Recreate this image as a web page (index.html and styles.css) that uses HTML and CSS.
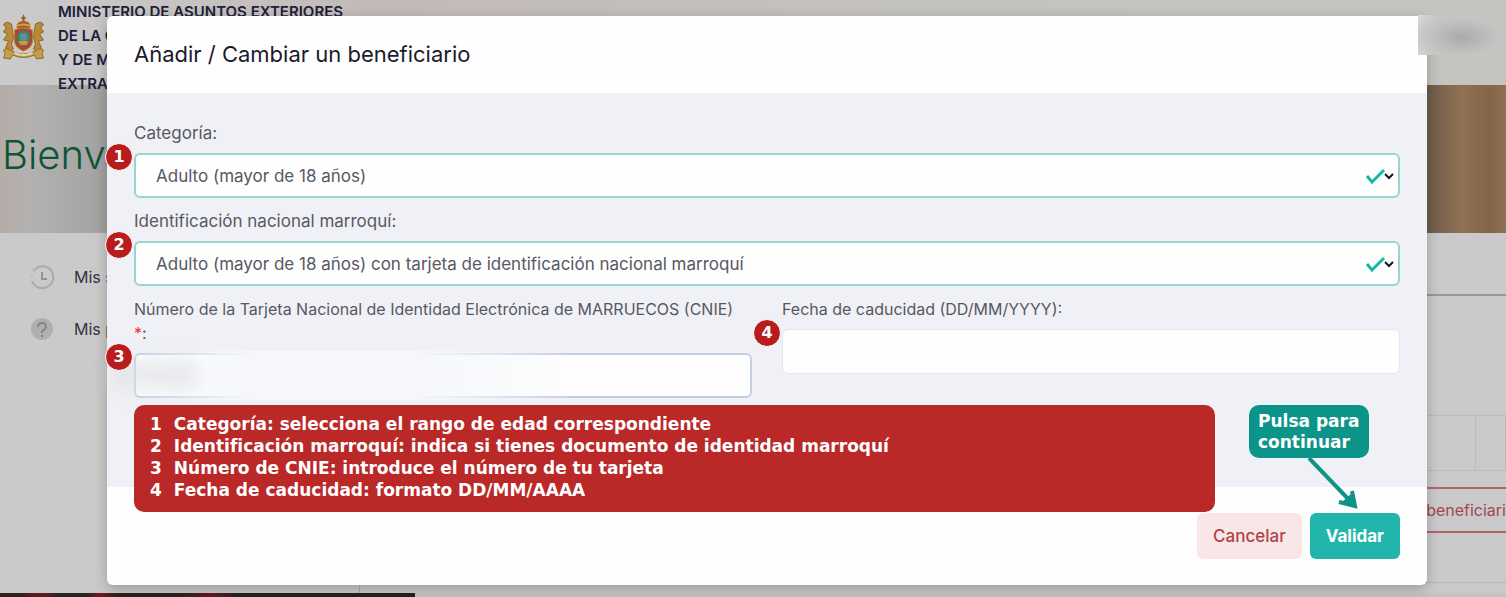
FILE: index.html
```html
<!DOCTYPE html>
<html lang="es">
<head>
<meta charset="utf-8">
<title>Añadir / Cambiar un beneficiario</title>
<link rel="stylesheet" href="styles.css">
</head>
<body>
<div class="page">
  <header class="site-header">
    <svg class="crest" viewBox="0 0 44 50" aria-hidden="true">
      <path d="M22 1l1 3 2 1-2 1v3h-2V6l-2-1 2-1z" fill="#8c5a22"/>
      <path d="M15 14q0-6 7-6t7 6l-2 4H17z" fill="#ad572f"/>
      <path d="M15 13q7-3 14 0" fill="none" stroke="#d0a83f" stroke-width="2"/>
      <path d="M13 17q9-4 18 0v12q-1 6-9 9-8-3-9-9z" fill="#b3423a" stroke="#b98c30"/>
      <ellipse cx="22" cy="25" rx="7" ry="8" fill="#4e7d4c"/>
      <ellipse cx="22" cy="24" rx="4" ry="4" fill="#5b8fa6"/>
      <path d="M17 28h10l-2 4h-6z" fill="#c79b38"/>
      <path d="M10 11q-6-4-8 1l3 2-3 5 4 2-4 6 5 1-3 7 4 4 4-3-2-5 2-6-1-8z" fill="#b88a3c" stroke="#94652a"/>
      <path d="M34 11q6-4 8 1l-3 2 3 5-4 2 4 6-5 1 3 7-4 4-4-3 2-5-2-6 1-8z" fill="#b88a3c" stroke="#94652a"/>
      <path d="M2 37q4-3 8 1 12 6 24 0 4-4 8-1-3 3 0 8l-7 1-2-4q-11 5-22 0l-2 4-7-1q3-5 0-8z" fill="#c2a04a" stroke="#8f6c2a"/>
      <path d="M13 40q9 4 18 0" fill="none" stroke="#e2d9b4" stroke-width="2"/>
    </svg>
    <div class="ministry">MINISTERIO DE ASUNTOS EXTERIORES<br>DE LA C<br>Y DE M<br>EXTRA</div>
  </header>
  <div class="hero"><h1 class="welcome">Bienv</h1></div>
  <main class="panel">
    <nav class="side">
      <a class="side-link" href="#">
        <svg class="side-icon" viewBox="0 0 24 24" aria-hidden="true"><path d="M5 4a11 11 0 1 1-3 12" fill="none" stroke="#aaa" stroke-width="2"/><path d="M2 12V9m1-3l2-2m0 0v4m0-4H1" fill="none" stroke="#b2b2b2" stroke-width="1"/><path d="M12 7v7h5" fill="none" stroke="#929292" stroke-width="2"/></svg>
        Mis s</a>
      <a class="side-link" href="#">
        <svg class="side-icon" viewBox="0 0 24 24" aria-hidden="true"><circle cx="12" cy="12" r="11" fill="#b0b0b0"/><path d="M8 10q0-4 4-4t4 4q0 2-4 4v2m0 2v2" fill="none" stroke="#858585" stroke-width="2"/></svg>
        Mis p</a>
    </nav>
    <section class="content">
      <div class="content-top"></div>
      <div class="content-space"></div>
      <div class="content-row"><span class="row-cell"></span></div>
      <a class="add-link" href="#">beneficiari</a>
      <div class="content-end"></div>
    </section>
  </main>
  <footer class="strip"></footer>
</div>

<div class="overlay">
  <form class="modal" role="dialog" aria-labelledby="title">
    <div class="modal-head"><h2 class="modal-title" id="title">Añadir / Cambiar un beneficiario</h2></div>
    <div class="modal-body">
      <div class="field">
        <label class="label" for="cat">Categoría:</label>
        <div class="control">
          <select class="input valid" id="cat"><option>Adulto (mayor de 18 años)</option></select>
          <svg class="marks" viewBox="0 0 30 18" aria-hidden="true"><path d="M2 9l5 6L19 3" fill="none" stroke="#17b8a8" stroke-width="3"/><path d="M20 7l4 4 4-4" fill="none" stroke="#161626" stroke-width="2"/></svg>
          <span class="badge">1</span>
        </div>
      </div>
      <div class="field">
        <label class="label" for="ident">Identificación nacional marroquí:</label>
        <div class="control">
          <select class="input valid" id="ident"><option>Adulto (mayor de 18 años) con tarjeta de identificación nacional marroquí</option></select>
          <svg class="marks" viewBox="0 0 30 18" aria-hidden="true"><path d="M2 9l5 6L19 3" fill="none" stroke="#17b8a8" stroke-width="3"/><path d="M20 7l4 4 4-4" fill="none" stroke="#161626" stroke-width="2"/></svg>
          <span class="badge">2</span>
        </div>
      </div>
      <div class="columns">
        <div class="field">
          <label class="label" for="cnie">Número de la Tarjeta Nacional de Identidad Electrónica de MARRUECOS (CNIE)<br><span class="required">*</span>:</label>
          <div class="control">
            <input class="input active" id="cnie" type="text">
            <span class="smudge"></span>
            <span class="badge">3</span>
          </div>
        </div>
        <div class="field">
          <label class="label" for="exp">Fecha de caducidad (DD/MM/YYYY):</label>
          <div class="control">
            <input class="input" id="exp" type="text">
            <span class="badge">4</span>
          </div>
        </div>
      </div>
      <ol class="legend">
        <li class="legend-item"><span>1</span><span>Categoría: selecciona el rango de edad correspondiente</span></li>
        <li class="legend-item"><span>2</span><span>Identificación marroquí: indica si tienes documento de identidad marroquí</span></li>
        <li class="legend-item"><span>3</span><span>Número de CNIE: introduce el número de tu tarjeta</span></li>
        <li class="legend-item"><span>4</span><span>Fecha de caducidad: formato DD/MM/AAAA</span></li>
      </ol>
      <div class="tip">Pulsa para<br>continuar
        <svg class="arrow" viewBox="0 0 52 52" aria-hidden="true"><path d="M2 0L46 46M45 33l3 15-16-4" fill="none" stroke="#0d9488" stroke-width="4"/><path d="M45 35l4 14-15-4z" fill="#0d9488"/></svg>
      </div>
    </div>
    <div class="modal-foot">
      <button class="btn cancel" type="button">Cancelar</button>
      <button class="btn submit" type="button">Validar</button>
    </div>
  </form>
</div>
<div class="corner"></div>
</body>
</html>
```
FILE: styles.css
```css
* { box-sizing: border-box; }

body {
  margin: 0;
  font-family: Inter, "Open Sans", sans-serif;
  font-size: 17px;
  color: #585862;
}

.page {
  isolation: isolate;
  display: flex;
  flex-direction: column;
  height: 100vh;
  overflow: hidden;
  background: #cacaca;
}

.site-header {
  z-index: 1;
  display: flex;
  flex: none;
  gap: 12px;
  height: 85px;
  padding-left: 1px;
  background: linear-gradient(90deg, #cbcbcb, #c2bab9 25%, #c5c3be 60%, #c5c4c0);
}

.crest { width: 45px; height: 50px; margin-top: 13px; }

.ministry {
  font-size: 15px;
  font-weight: 600;
  line-height: 24px;
  color: #20203a;
  white-space: nowrap;
}

.hero {
  flex: none;
  height: 148px;
  padding: 44px 0 0 2px;
  background: linear-gradient(90deg, #b5aca7, #b3b2b1 2%, #a2a2a2 7%, #8b7b6b 70%, #705e4c 95%, #8f7153 97%, #856547 99%, #8f7153);
}

.welcome {
  margin: 0;
  font-size: 40px;
  font-weight: 300;
  line-height: 52px;
  color: #0d5535;
}

.panel {
  display: grid;
  grid-template-columns: 358px 1fr;
  flex: 1;
  margin-left: 2px;
  border-radius: 6px 0 0 0;
  background: #cacaca;
}

.side {
  display: flex;
  flex-direction: column;
  gap: 28px;
  padding: 32px 28px;
  border-right: 1px solid #aaa;
}

.side-link {
  display: flex;
  align-items: center;
  gap: 20px;
  font-size: 16px;
  line-height: 24px;
  color: #33333f;
  text-decoration: none;
}

.side-icon { width: 24px; height: 24px; }

.content { display: flex; flex-direction: column; }
.content-top { height: 63px; border-bottom: 2px solid #989898; }
.content-space { height: 119px; }

.content-row {
  display: flex;
  justify-content: flex-end;
  height: 56px;
  border: 1px solid #bbb;
}

.row-cell { width: 30px; border-left: 1px solid #bbb; }

.add-link {
  margin-top: 16px;
  height: 46px;
  border: 2px solid #b36469;
  border-width: 2px 0;
  font-size: 16px;
  line-height: 42px;
  text-align: right;
  text-decoration: none;
  color: #a2474f;
}

.content-end { height: 50px; border-bottom: 1px solid #b7b7b7; }

.strip {
  z-index: 1;
  flex: none;
  height: 4px;
  background: linear-gradient(90deg, #302020 0 20px, #611b20 40px, #262424 60px 85px, #701a20 100px, #29211f 120px 180px, #611b20 210px, #222 240px 415px, #c4c4c4 415px);
}

.overlay {
  position: absolute;
  inset: 0;
  padding: 16px 79px 12px 107px;
}

.modal {
  border-radius: 6px;
  background: #fefefe;
  box-shadow: 0 4px 14px rgba(0, 0, 0, .24);
}

.modal-head { padding: 22px 27px 23px; }

.modal-title {
  margin: 0;
  font-size: 22px;
  font-weight: 400;
  line-height: 32px;
  color: #1b1b2c;
}

.modal-body {
  position: relative;
  display: flex;
  flex-direction: column;
  gap: 11px;
  padding: 28px 27px 89px;
  background: #f0f1f6;
}

.columns {
  display: grid;
  grid-template-columns: 1fr 1fr;
  align-items: start;
  gap: 30px;
  font-size: 16px;
}

.label {
  display: block;
  margin-bottom: 8px;
  line-height: 24px;
}

.required { color: #e2383f; }

.control { position: relative; }

.input {
  display: block;
  width: 100%;
  height: 45px;
  padding: 0 20px;
  appearance: none;
  border: 1px solid #e4e6ee;
  border-radius: 6px;
  background: #fefefe;
  font: inherit;
  color: inherit;
}

.valid { border: 2px solid #98d5cc; }
.active { border: 2px solid #c4cfe2; }

.marks {
  position: absolute;
  top: 14px;
  right: 5px;
  width: 30px;
  height: 18px;
}

.smudge {
  position: absolute;
  top: -2px;
  left: -24px;
  width: 470px;
  height: 49px;
  border-radius: 0 24px 24px 0;
  background: linear-gradient(90deg, transparent 5%, #f5f7fb 30%, #f5f7fb 65%, transparent);
}

.smudge::after {
  content: "";
  position: absolute;
  top: 8px;
  left: 0;
  width: 90px;
  height: 32px;
  border-radius: 16px;
  background: rgba(222, 223, 226, .6);
  filter: blur(8px);
}

.badge {
  position: absolute;
  top: -10px;
  left: -29px;
  width: 28px;
  height: 28px;
  border: 1px solid #fff;
  border-radius: 50%;
  background: #b91c1c;
  color: #fff;
  font: bold 16px/26px "DejaVu Sans", sans-serif;
  text-align: center;
}

.legend {
  position: absolute;
  top: 312px;
  left: 27px;
  right: 212px;
  margin: 0;
  padding: 8px 16px 11px;
  border-radius: 10px;
  background: #bb2828;
  color: #fff;
  font: bold 17px/22px "DejaVu Sans", sans-serif;
  list-style: none;
}

.legend-item { display: flex; gap: 12px; }

.tip {
  position: absolute;
  top: 312px;
  right: 58px;
  width: 120px;
  padding: 6px 9px 5px;
  border-radius: 10px;
  background: #0d9488;
  color: #fff;
  font: bold 17px/21px "DejaVu Sans", sans-serif;
  white-space: nowrap;
}

.arrow {
  position: absolute;
  top: 100%;
  left: 58px;
  width: 52px;
  height: 52px;
}

.modal-foot {
  display: flex;
  justify-content: flex-end;
  gap: 8px;
  padding: 26px 27px;
}

.btn {
  height: 46px;
  padding: 0 16px;
  border: 0;
  border-radius: 6px;
  font: 500 17px/24px Inter, sans-serif;
}

.cancel { background: #f9e6e7; color: #b04248; }
.submit { background: #22b5ab; color: #fff; font-weight: 700; }

.corner {
  position: absolute;
  top: 15px;
  right: 0;
  width: 88px;
  height: 40px;
  background: radial-gradient(ellipse at 50% 55%, #aeabae 5%, #b9b7b8 30%, rgba(198, 197, 195, .9) 60%, transparent), linear-gradient(90deg, #dcdcdc, #c5c4c1 30%);
}
```
